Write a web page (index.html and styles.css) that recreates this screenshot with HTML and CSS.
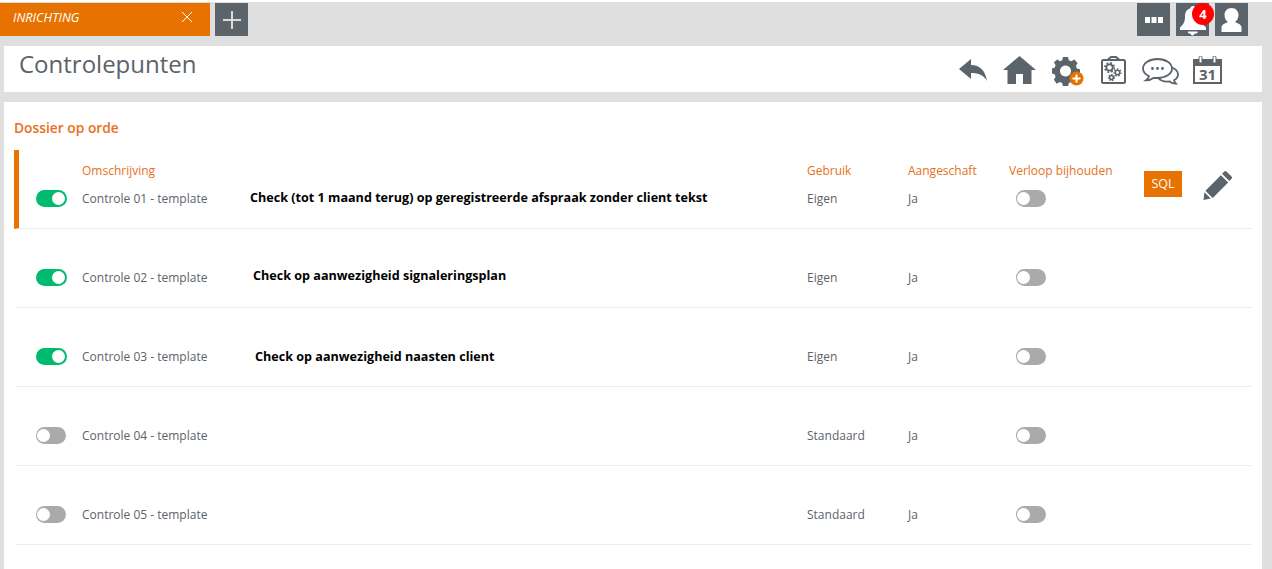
FILE: index.html
```html
<!DOCTYPE html>
<html lang="nl">
<head>
<meta charset="utf-8">
<title>Controlepunten</title>
<link rel="stylesheet" href="styles.css">
</head>
<body>
<header class="topbar">
  <div class="tab"><span class="tab-name">INRICHTING</span>
    <svg class="tab-x" width="12" height="12" viewBox="0 0 12 12"><path d="M1 1l10 10M11 1L1 11" stroke="#fff" stroke-width="1"/></svg>
  </div>
  <div class="sq add"><svg width="18" height="18" viewBox="0 0 18 18"><path d="M9 0v18M0 9h18" stroke="#dcdcdc" stroke-width="2"/></svg></div>
  <div class="top-right">
    <div class="sq"><svg width="18" height="6" viewBox="0 0 18 6"><path d="M0 0h5v6H0zM6.500 0h5v6h-5zM13 0h5v6h-5z" fill="#fff"/></svg></div>
    <div class="sq bell-box">
      <svg width="33" height="33" viewBox="0 0 33 33"><path d="M17 3c1.500 0 2.500 1 2.500 2.200 4 1 5.500 4.300 5.500 8.300 0 5 1.500 8 5 11v2.500H4V24.500c3.500-3 5-6 5-11 0-4 1.500-7.300 5.500-8.300C14.500 4 15.500 3 17 3zM12 28.500h9.500V30c-1 .6-2 .8-3 .8-.4 1-1 1.700-2 1.700s-1.600-.7-2-1.700c-1 0-1.800-.2-2.500-.8z" fill="#fff"/></svg>
      <span class="badge">4</span>
    </div>
    <div class="sq"><svg width="33" height="33" viewBox="0 0 33 33"><path d="M16.500 5c4 0 7 2.800 7 7 0 3-1.300 5.300-3 6.600v1c3 .8 6 2.300 6 5V29H6.500v-4.400c0-2.700 3-4.200 6-5v-1c-1.700-1.300-3-3.600-3-6.600 0-4.200 3-7 7-7z" fill="#fff"/></svg></div>
  </div>
</header>

<section class="titlebar">
  <h1>Controlepunten</h1>
  <div class="tools">
    <svg class="t-back" width="28" height="22" viewBox="0 0 28 22"><path d="M12 0v6C21 6 26.500 12 28 22c-3-5.500-8-8-16-8v6L0 10z" fill="#5b636b"/></svg>
    <svg class="t-home" width="33" height="28" viewBox="0 0 33 28"><path d="M16.500 0L33 14h-4.500v14H20V18h-7v10H4.500V14H0z" fill="#5b636b"/></svg>
    <svg class="t-gear" width="32" height="29" viewBox="0 0 32 29"><path fill-rule="evenodd" d="M11 0h5l.8 3.300 2.500 1 3-1.700 3.300 3.300-1.700 3 1 2.500 3.100.8v5l-3.100.8-1 2.500 1.700 3-3.300 3.300-3-1.700-2.500 1-.8 3.900h-5l-.8-3.900-2.500-1-3 1.700L1.900 22.800l1.700-3-1-2.500L0 16.500v-5l2.600-.8 1-2.500-1.700-3L5.200 2.600l3 1.700 2-1z M13.500 8.500a5.500 5.500 0 1 0 .01 0z" fill="#5b636b"/><circle cx="24.500" cy="21.500" r="7" fill="#e87200"/><path d="M24.500 17.500v8M20.500 21.500h8" stroke="#fff" stroke-width="2"/></svg>
    <svg class="t-clip" width="25" height="28" viewBox="0 0 25 28"><path d="M7 3.500L10 1h5l3 2.500" fill="none" stroke="#5b636b" stroke-width="2"/><rect x="1" y="4" width="23" height="23" rx="1.500" fill="none" stroke="#5b636b" stroke-width="2"/><circle cx="8.500" cy="11.500" r="3.200" fill="none" stroke="#5b636b" stroke-width="1.800"/><circle cx="8.500" cy="11.500" r="4.700" fill="none" stroke="#5b636b" stroke-width="1.600" stroke-dasharray="1.900 1.800"/><circle cx="16.500" cy="16.500" r="2.200" fill="none" stroke="#5b636b" stroke-width="1.500"/><circle cx="16.500" cy="16.500" r="3.500" fill="none" stroke="#5b636b" stroke-width="1.300" stroke-dasharray="1.600 1.500"/><circle cx="10.500" cy="21.500" r="1.900" fill="none" stroke="#5b636b" stroke-width="1.500"/><circle cx="10.500" cy="21.500" r="3" fill="none" stroke="#5b636b" stroke-width="1.200" stroke-dasharray="1.400 1.300"/></svg>
    <svg class="t-chat" width="37" height="27" viewBox="0 0 37 27"><path d="M30 9.500c3.500 1.500 6 4 6 7 0 2.500-1.700 4.500-4 5.700.2 1.500 1 2.500 2 3.500-2.500 0-5-.8-6.500-2.300-4 .6-8.500-.5-11-3" fill="#fff" stroke="#5b636b" stroke-width="1.800"/><path d="M15.500 1C7.500 1 1 5 1 10.500c0 3.300 2.500 6 6 7.800-.5 1.700-1.500 3-3 4 3 0 6-1 8-2.500 1 .2 2.300.2 3.500.2 8 0 14.500-4 14.500-9.500S23.500 1 15.500 1z" fill="#fff" stroke="#5b636b" stroke-width="1.800"/><circle cx="10.500" cy="10.500" r="1.400" fill="#5b636b"/><circle cx="15.500" cy="10.500" r="1.400" fill="#5b636b"/><circle cx="20.500" cy="10.500" r="1.400" fill="#5b636b"/></svg>
    <div class="t-cal">
      <svg width="29" height="28" viewBox="0 0 29 28"><path d="M1 4h27v23H1z" fill="none" stroke="#5b636b" stroke-width="2"/><path d="M1 4h27v6H1z" fill="#5b636b"/><rect x="6" y="0" width="3" height="7" rx="1.500" fill="#fff" stroke="#5b636b"/><rect x="20" y="0" width="3" height="7" rx="1.500" fill="#fff" stroke="#5b636b"/></svg>
      <span class="cal-num">31</span>
    </div>
  </div>
</section>

<main class="panel">
  <h2>Dossier op orde</h2>

  <div class="row active">
    <div class="c-sw"><span class="sw on"></span></div>
    <div class="c-name"><span class="lbl">Omschrijving</span><span class="val">Controle 01 - template</span></div>
    <div class="c-note n1">Check (tot 1 maand terug) op geregistreerde afspraak zonder client tekst</div>
    <div class="c-use"><span class="lbl">Gebruik</span><span class="val">Eigen</span></div>
    <div class="c-own"><span class="lbl">Aangeschaft</span><span class="val">Ja</span></div>
    <div class="c-exp"><span class="lbl">Verloop bijhouden</span><span class="sw off"></span></div>
    <div class="c-act">
      <span class="sql">SQL</span>
      <svg class="pen" width="30" height="30" viewBox="0 0 31 31"><path d="M22 1.500a1.500 1.500 0 0 1 2.200 0l5.300 5.300a1.500 1.500 0 0 1 0 2.200l-2.300 2.300-7.500-7.500zM18.500 5.500l7.500 7.500L10 29l-7.500-7.500zM1.500 23l6.500 6.500-7.500 1.500z" fill="#5b636b"/></svg>
    </div>
  </div>

  <div class="row">
    <div class="c-sw"><span class="sw on"></span></div>
    <div class="c-name"><span class="val">Controle 02 - template</span></div>
    <div class="c-note n2">Check op aanwezigheid signaleringsplan</div>
    <div class="c-use"><span class="val">Eigen</span></div>
    <div class="c-own"><span class="val">Ja</span></div>
    <div class="c-exp"><span class="sw off"></span></div>
    <div class="c-act"></div>
  </div>

  <div class="row">
    <div class="c-sw"><span class="sw on"></span></div>
    <div class="c-name"><span class="val">Controle 03 - template</span></div>
    <div class="c-note n3">Check op aanwezigheid naasten client</div>
    <div class="c-use"><span class="val">Eigen</span></div>
    <div class="c-own"><span class="val">Ja</span></div>
    <div class="c-exp"><span class="sw off"></span></div>
    <div class="c-act"></div>
  </div>

  <div class="row">
    <div class="c-sw"><span class="sw off"></span></div>
    <div class="c-name"><span class="val">Controle 04 - template</span></div>
    <div class="c-note"></div>
    <div class="c-use"><span class="val">Standaard</span></div>
    <div class="c-own"><span class="val">Ja</span></div>
    <div class="c-exp"><span class="sw off"></span></div>
    <div class="c-act"></div>
  </div>

  <div class="row">
    <div class="c-sw"><span class="sw off"></span></div>
    <div class="c-name"><span class="val">Controle 05 - template</span></div>
    <div class="c-note"></div>
    <div class="c-use"><span class="val">Standaard</span></div>
    <div class="c-own"><span class="val">Ja</span></div>
    <div class="c-exp"><span class="sw off"></span></div>
    <div class="c-act"></div>
  </div>
</main>
</body>
</html>
```
FILE: styles.css
```css
* { box-sizing: border-box; }
html, body { height: 100%; }
body {
  margin: 0;
  background: #dfdfdf;
  border-top: 2px solid #fff;
  font-family: "Open Sans", sans-serif;
  color: #5b636b;
  overflow: hidden;
}
.topbar {
  display: flex;
  height: 33px;
  margin-top: 1px;
  padding-right: 24px;
}
.tab {
  width: 210px;
  background: #e87200;
  color: #fff;
  display: flex;
  align-items: center;
  justify-content: space-between;
  padding: 0 17px 5px 13px;
}
.tab-name { font-size: 12.7px; font-style: italic; font-weight: 400; }
.sq {
  width: 33px;
  height: 33px;
  background: #5b636b;
  display: flex;
  align-items: center;
  justify-content: center;
  position: relative;
}
.add { margin-left: 5px; }
.top-right { margin-left: auto; display: flex; gap: 6px; }
.badge {
  position: absolute;
  top: 0;
  left: 16px;
  width: 22px;
  height: 22px;
  border-radius: 50%;
  background: #f00;
  color: #fff;
  font-size: 13px;
  font-weight: 700;
  line-height: 22px;
  text-align: center;
}
.titlebar {
  margin: 10px 10px 0 4px;
  height: 46px;
  background: #fff;
  display: flex;
  justify-content: space-between;
  padding: 0 40px 0 15px;
}
h1 {
  margin: 0;
  font-size: 24px;
  font-weight: 400;
  line-height: 36px;
  color: #5b636b;
}
.tools { display: flex; align-items: flex-start; padding-top: 10px; }
.t-back { margin-top: 3px; }
.t-home { margin-left: 16px; }
.t-gear { margin: 1px 0 0 16px; }
.t-clip { margin-left: 17px; }
.t-chat { margin: 2px 0 0 16px; }
.t-cal { margin-left: 14px; position: relative; width: 29px; height: 28px; }
.cal-num {
  position: absolute;
  left: 0;
  right: 0;
  top: 10px;
  text-align: center;
  font-size: 15px;
  font-weight: 700;
  line-height: 17px;
}
.panel {
  margin: 10px 10px 0 4px;
  height: 467px;
  background: #fff;
  padding: 0 10px;
}
h2 {
  margin: 0;
  padding-top: 16px;
  height: 48px;
  font-size: 13.8px;
  font-weight: 600;
  line-height: 20px;
  color: #e8701a;
}
.row {
  display: flex;
  height: 79px;
  margin-left: 2px;
  border-bottom: 1px solid #ececec;
  font-size: 12px;
  position: relative;
}
.row.active { margin-left: 0; border-left: 5px solid #e87200; }
.row.active .c-sw { width: 63px; padding-left: 17px; }
.c-sw { width: 66px; padding: 40px 0 0 20px; }
.c-name { width: 168px; }
.c-note {
  width: 557px;
  padding-top: 40px;
  font-size: 12.6px;
  font-weight: 700;
  line-height: 16px;
  color: #000;
  white-space: nowrap;
}
.n2 { padding: 39px 0 0 3px; }
.n3 { padding: 41px 0 0 5px; }
.c-use { width: 101px; }
.c-own { width: 101px; }
.c-exp { width: 135px; }
.c-act { flex: 1; display: flex; align-items: flex-start; }
.lbl {
  position: absolute;
  top: 12px;
  line-height: 17px;
  color: #e8701a;
  white-space: nowrap;
}
.val {
  display: block;
  padding-top: 40px;
  line-height: 17px;
  white-space: nowrap;
}
.sw {
  display: block;
  width: 30px;
  height: 17px;
  border-radius: 9px;
  position: relative;
}
.sw::after {
  content: "";
  position: absolute;
  top: 2px;
  width: 13px;
  height: 13px;
  border-radius: 50%;
  background: #fff;
}
.sw.on { width: 31px; background: #00bb6e; }
.sw.on::after { right: 2px; }
.sw.off { background: #aaa; }
.sw.off::after { left: 1px; }
.c-exp .sw { margin: 40px 0 0 7px; }
.sql {
  margin-top: 21px;
  width: 38px;
  height: 26px;
  background: #e87200;
  color: #fff;
  font-size: 12.5px;
  line-height: 26px;
  text-align: center;
}
.pen { margin: 20px 0 0 21px; }
```
